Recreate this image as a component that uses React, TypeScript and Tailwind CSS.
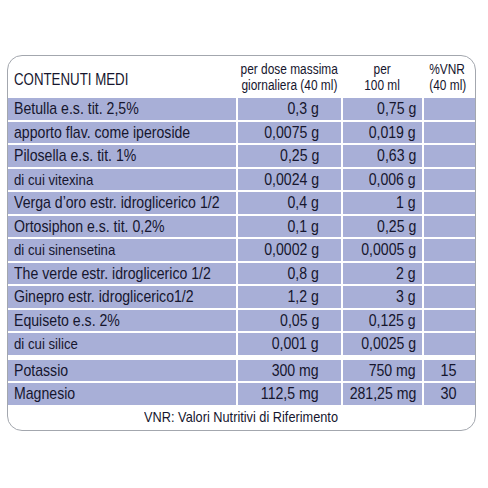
import React from "react";

const rows1: [string, string, string, boolean][] = [
  ["Betulla e.s. tit. 2,5%", "0,3 g", "0,75 g", false],
  ["apporto flav. come iperoside", "0,0075 g", "0,019 g", false],
  ["Pilosella e.s. tit. 1%", "0,25 g", "0,63 g", false],
  ["di cui vitexina", "0,0024 g", "0,006 g", true],
  ["Verga d\u2019oro estr. idroglicerico 1/2", "0,4 g", "1 g", false],
  ["Ortosiphon e.s. tit. 0,2%", "0,1 g", "0,25 g", false],
  ["di cui sinensetina", "0,0002 g", "0,0005 g", true],
  ["The verde estr. idroglicerico 1/2", "0,8 g", "2 g", false],
  ["Ginepro estr. idroglicerico1/2", "1,2 g", "3 g", false],
  ["Equiseto e.s. 2%", "0,05 g", "0,125 g", false],
  ["di cui silice", "0,001 g", "0,0025 g", true],
];

const rows2: [string, string, string, string][] = [
  ["Potassio", "300 mg", "750 mg", "15"],
  ["Magnesio", "112,5 mg", "281,25 mg", "30"],
];

const font = { fontFamily: '"Liberation Sans", Arial, sans-serif' };

function L({ children, s }: { children: React.ReactNode; s?: boolean }) {
  return (
    <span className={`inline-block whitespace-nowrap origin-left ${s ? "scale-x-[0.88]" : "scale-x-[0.83]"}`}>
      {children}
    </span>
  );
}
function R({ children }: { children: React.ReactNode }) {
  return <span className="inline-block whitespace-nowrap scale-x-[0.83] origin-right">{children}</span>;
}
function C({ children }: { children: React.ReactNode }) {
  return <span className="inline-block whitespace-nowrap scale-x-[0.85] origin-center">{children}</span>;
}

function Row({ a, b, c, d, small }: { a: string; b: string; c: string; d?: string; small?: boolean }) {
  return (
    <div className="grid grid-cols-[228px_103px_79px_51px] gap-x-[2px] h-[21.5px] text-[#16162e] leading-none">
      <div className={`bg-[#a8afd7] pl-[6px] flex items-center ${small ? "text-[15px]" : "text-[17px]"}`}>
        <L s={small}>{a}</L>
      </div>
      <div className="bg-[#a8afd7] pr-[22px] flex items-center justify-end text-[17px]">
        <R>{b}</R>
      </div>
      <div className="bg-[#a8afd7] pr-[6px] flex items-center justify-end text-[17px]">
        <R>{c}</R>
      </div>
      <div className="bg-[#a8afd7] flex items-center justify-center text-[17px] pr-[3px]">
        <C>{d ?? ""}</C>
      </div>
    </div>
  );
}

export default function App() {
  return (
    <div className="w-[488px] h-[488px] bg-white pt-[55px] pl-[7px]" style={font}>
      <div className="w-[469px] h-[376px] border border-[#a3a7ae] rounded-[15px] overflow-hidden flex flex-col bg-white">
        <div className="grid grid-cols-[228px_103px_79px_51px] gap-x-[2px] h-[42px] text-[#16162e] shrink-0">
          <div className="pl-[6px] flex items-center text-[16px] pt-[5px]">
            <L>CONTENUTI MEDI</L>
          </div>
          <div className="flex flex-col items-center justify-center text-[14px] leading-[16px]">
            <C>per dose massima</C>
            <C>giornaliera (40 ml)</C>
          </div>
          <div className="flex flex-col items-center justify-center text-[14px] leading-[16px]">
            <C>per</C>
            <C>100 ml</C>
          </div>
          <div className="flex flex-col items-center justify-center text-[14px] leading-[16px] pr-[4px]">
            <C>%VNR</C>
            <C>(40 ml)</C>
          </div>
        </div>
        <div className="flex flex-col gap-y-[2px] shrink-0">
          {rows1.map((r, i) => (
            <Row key={i} a={r[0]} b={r[1]} c={r[2]} small={r[3]} />
          ))}
        </div>
        <div className="flex flex-col gap-y-[2px] mt-[5px] shrink-0">
          {rows2.map((r, i) => (
            <Row key={i} a={r[0]} b={r[1]} c={r[2]} d={r[3]} />
          ))}
        </div>
        <div className="flex-1 flex items-center justify-center text-[15px] text-[#16162e]">
          <C>VNR: Valori Nutritivi di Riferimento</C>
        </div>
      </div>
    </div>
  );
}
